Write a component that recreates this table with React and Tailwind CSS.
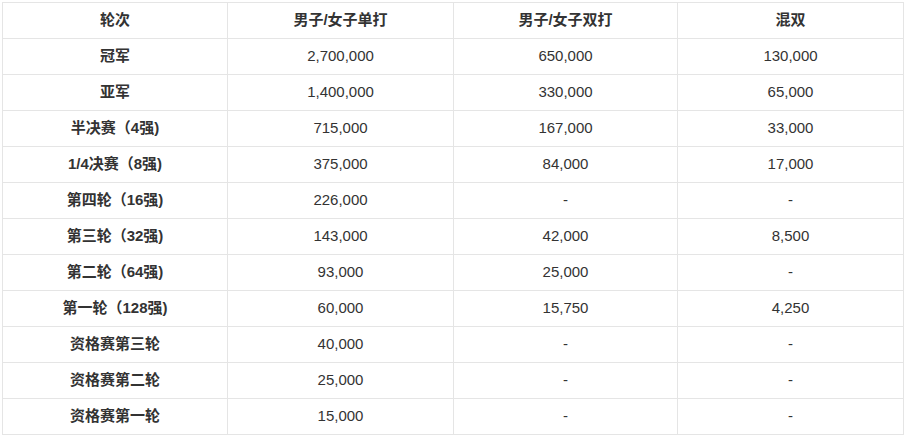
const rows = [
  ['冠军', '2,700,000', '650,000', '130,000'],
  ['亚军', '1,400,000', '330,000', '65,000'],
  ['半决赛（4强)', '715,000', '167,000', '33,000'],
  ['1/4决赛（8强)', '375,000', '84,000', '17,000'],
  ['第四轮（16强)', '226,000', '-', '-'],
  ['第三轮（32强)', '143,000', '42,000', '8,500'],
  ['第二轮（64强)', '93,000', '25,000', '-'],
  ['第一轮（128强)', '60,000', '15,750', '4,250'],
  ['资格赛第三轮', '40,000', '-', '-'],
  ['资格赛第二轮', '25,000', '-', '-'],
  ['资格赛第一轮', '15,000', '-', '-'],
];

const headers = ['轮次', '男子/女子单打', '男子/女子双打', '混双'];

export default function App() {
  return (
    <div className="bg-white min-h-screen pt-[2px] pl-[2px] text-[#333] text-[15px] font-['Liberation_Sans','Noto_Sans_CJK_SC',sans-serif]">
      <table className="w-[901px] border-collapse table-fixed">
        <colgroup>
          <col className="w-[225px]" />
          <col className="w-[226px]" />
          <col className="w-[224px]" />
          <col className="w-[226px]" />
        </colgroup>
        <thead>
          <tr className="h-[36px]">
            {headers.map(h => (
              <th key={h} className="border border-[#e5e5e5] text-center font-bold p-0">{h}</th>
            ))}
          </tr>
        </thead>
        <tbody>
          {rows.map(r => (
            <tr key={r[0]} className="h-[36px]">
              <td className="border border-[#e5e5e5] text-center font-bold p-0">{r[0]}</td>
              <td className="border border-[#e5e5e5] text-center p-0">{r[1]}</td>
              <td className="border border-[#e5e5e5] text-center p-0">{r[2]}</td>
              <td className="border border-[#e5e5e5] text-center p-0">{r[3]}</td>
            </tr>
          ))}
        </tbody>
      </table>
    </div>
  );
}
